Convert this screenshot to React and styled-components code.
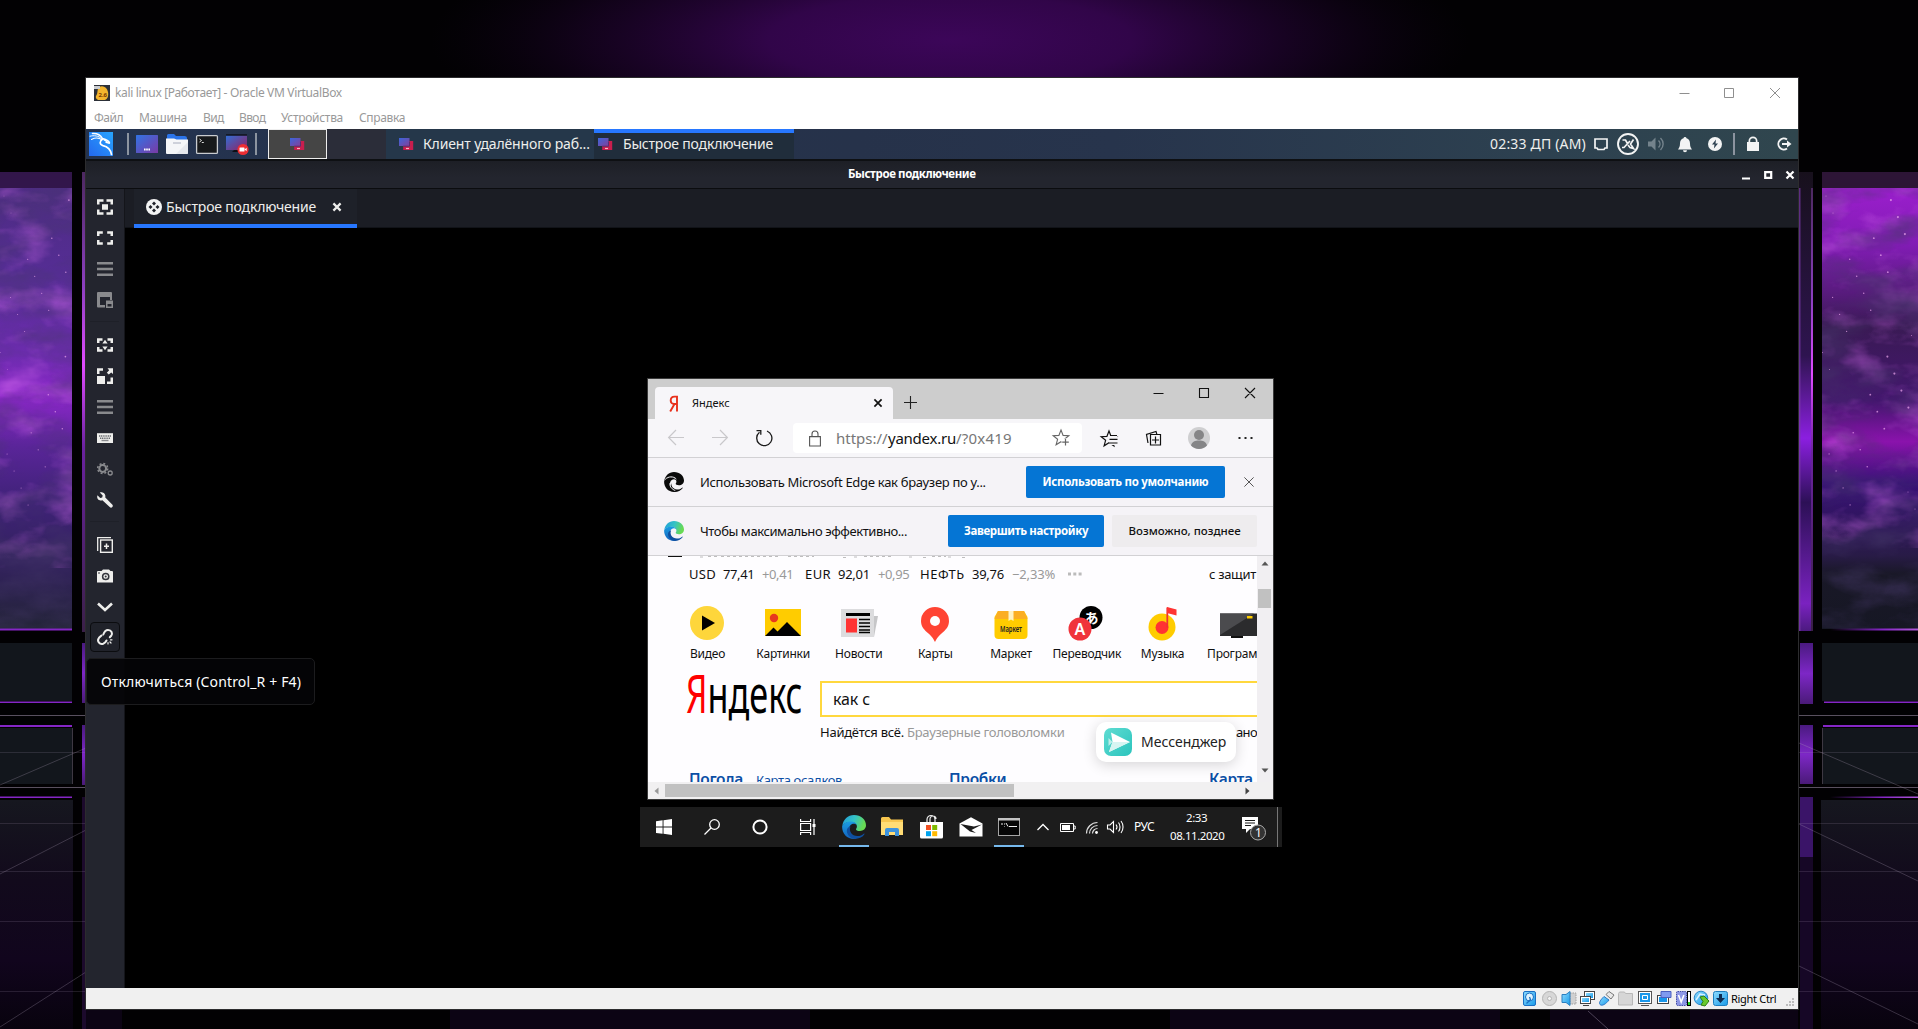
import React from "react";
import styled, { createGlobalStyle, css } from "styled-components";

const Global = createGlobalStyle`
  * { box-sizing: border-box; }
  html, body { margin: 0; padding: 0; background: #000; overflow: hidden; }
  body { font-family: "Noto Sans", "Open Sans", sans-serif; }
  svg { display: block; flex: none; }
`;

const Desktop = styled.main`
  position: relative;
  width: 1918px;
  height: 1029px;
  overflow: hidden;
  background: #020103;
`;

const Backdrop = styled.svg`
  position: absolute;
  inset: 0;
`;

const Txt = styled.span`
  display: block;
  flex: none;
  white-space: pre;
  width: ${(p) => (p.$w ? `${p.$w}px` : "auto")};
  margin-left: ${(p) => p.$ml || 0}px;
  padding-bottom: ${(p) => p.$up || 0}px;
  padding-top: ${(p) => p.$down || 0}px;
  font-size: ${(p) => p.$size || 12}px;
  font-weight: ${(p) => p.$weight || 400};
  letter-spacing: ${(p) => p.$ls || 0}px;
  line-height: ${(p) => p.$lh || 18}px;
  color: ${(p) => p.$color || "inherit"};
`;

const Icon = styled.svg`
  margin-left: ${(p) => p.$ml || 0}px;
  margin-top: ${(p) => p.$mt || 0}px;
  overflow: visible;
`;

/* ---------- VM window ---------- */

const VmWindow = styled.section`
  position: absolute;
  left: 86px;
  top: 78px;
  width: 1712px;
  height: 931px;
  display: flex;
  flex-direction: column;
  background: #fff;
  box-shadow: 0 0 0 1px #2c2c2e;
`;

const VmTitle = styled.header`
  display: flex;
  align-items: center;
  height: 29px;
  padding-left: 8px;
  color: #999;
`;

const VmMenu = styled.nav`
  display: flex;
  align-items: center;
  height: 22px;
  color: #999;
`;

const Spacer = styled.div`
  flex: 1;
`;

const Panel = styled.div`
  display: flex;
  align-items: center;
  height: 30px;
  background: linear-gradient(90deg, #24334f 0%, #26324a 45%, #27344c 60%, #2d4150 85%, #30464e 100%);
  color: #eeeeec;
  padding-left: 3px;
`;

const PanelRule = styled.i`
  width: 2px;
  height: 22px;
  background: #8c94a0;
  margin-left: ${(p) => p.$ml}px;
`;

const Workspace = styled.div`
  display: flex;
  align-items: center;
  justify-content: center;
  width: 59px;
  height: 30px;
  margin-left: ${(p) => p.$ml || 0}px;
  background: ${(p) => (p.$active ? "#454545" : "#2b2d39")};
  border: ${(p) => (p.$active ? "1px solid #eee" : "0")};
`;

const Task = styled.div`
  display: flex;
  align-items: center;
  height: 30px;
  width: ${(p) => p.$w}px;
  padding-left: ${(p) => p.$pl}px;
  background: ${(p) => (p.$active ? "#202d3b" : "#25374a")};
  border-top: ${(p) => (p.$active ? "4px solid #2777ff" : "0")};
  ${(p) =>
    p.$active &&
    css`
      padding-bottom: 4px;
    `}
`;

const ClientTitle = styled.div`
  display: flex;
  align-items: center;
  height: 30px;
  border-top: 2px solid #0e1013;
  border-bottom: 1px solid #0b0c0f;
  background: linear-gradient(#1d1f26, #23252e 60%);
  color: #fff;
`;

const ClientBody = styled.div`
  display: flex;
  flex: 1;
  min-height: 0;
  background: #23252e;
`;

const Tools = styled.aside`
  display: flex;
  flex-direction: column;
  align-items: center;
  width: 39px;
  padding: 2px 1px 0 0;
  border-right: 1px solid #14151a;
`;

const Tool = styled.div`
  display: flex;
  align-items: center;
  justify-content: center;
  width: 30px;
  height: 31px;
  flex: none;
  opacity: ${(p) => (p.$off ? 0.5 : 1)};
  color: #eeeeec;
  ${(p) =>
    p.$hover &&
    css`
      height: 30px;
      border: 1px solid #0b0c0f;
      border-radius: 4px;
      background: #20222a;
    `}
`;

const ToolRule = styled.i`
  width: 29px;
  height: 1px;
  margin: 6px 0 7px;
  flex: none;
  background: #1e2028;
`;

const Main = styled.div`
  display: flex;
  flex-direction: column;
  flex: 1;
`;

const TabBar = styled.div`
  display: flex;
  height: 39px;
  padding-left: 9px;
  background: #1b1d24;
  border-bottom: 1px solid #111318;
`;

const ClientTab = styled.div`
  display: flex;
  align-items: center;
  width: 223px;
  height: 39px;
  padding-left: 12px;
  background: #1e2129;
  border-bottom: 4px solid #2777ff;
  color: #eeeeec;
`;

const Stage = styled.div`
  position: relative;
  flex: 1;
  background: #000;
`;

const StatusBar = styled.footer`
  display: flex;
  align-items: center;
  justify-content: flex-end;
  height: 21px;
  background: #f0f0f0;
  color: #000;
`;

const Tooltip = styled.div`
  position: absolute;
  left: 86px;
  top: 658px;
  width: 229px;
  height: 47px;
  display: flex;
  align-items: center;
  padding-left: 14px;
  border: 1px solid #1c1c1e;
  border-radius: 5px;
  background: rgba(4, 4, 6, 0.93);
  color: #fff;
`;

/* ---------- Browser ---------- */

const Browser = styled.section`
  position: absolute;
  left: 523px;
  top: 151px;
  width: 625px;
  height: 420px;
  display: flex;
  flex-direction: column;
  background: #f6f4f8;
  box-shadow: 0 0 0 1px #3a3a3a;
  color: #111;
`;

const Strip = styled.div`
  display: flex;
  height: 40px;
  padding: 8px 0 0 7px;
  background: #cdcdcd;
`;

const PageTab = styled.div`
  display: flex;
  align-items: center;
  width: 238px;
  height: 32px;
  border-radius: 4px 4px 0 0;
  background: #f7f6f9;
`;

const StripIcons = styled.div`
  display: flex;
  align-items: flex-start;
  flex: 1;
`;

const Address = styled.div`
  display: flex;
  align-items: center;
  width: 289px;
  height: 30px;
  margin-left: 21px;
  border-radius: 4px;
  background: #fff;
`;

const Toolbar = styled.div`
  display: flex;
  align-items: center;
  height: 39px;
  border-bottom: 1px solid #d2d1d4;
  background: #f7f6f9;
`;

const InfoBar = styled.div`
  display: flex;
  align-items: center;
  height: 49px;
  padding-left: 16px;
  border-bottom: 1px solid #d2d1d4;
  background: #f5f3f7;
`;

const Button = styled.div`
  display: flex;
  align-items: center;
  justify-content: center;
  width: ${(p) => p.$w}px;
  height: 32px;
  margin-left: ${(p) => p.$ml}px;
  border-radius: 2px;
  background: ${(p) => (p.$plain ? "#eeecee" : "#0575d4")};
  color: ${(p) => (p.$plain ? "#111" : "#fff")};
`;

const View = styled.div`
  position: relative;
  display: flex;
  height: 226px;
`;

const Page = styled.div`
  width: 609px;
  height: 226px;
  overflow: hidden;
  background: #fefdff;
`;

const Row = styled.div`
  display: flex;
  align-items: ${(p) => p.$align || "center"};
  height: ${(p) => p.$h}px;
  padding-left: ${(p) => p.$pl || 0}px;
  margin-top: ${(p) => p.$mt || 0}px;
`;

const Service = styled.div`
  display: flex;
  flex: none;
  flex-direction: column;
  align-items: center;
  width: 75.8px;
`;

const SearchBox = styled.div`
  flex: none;
  display: flex;
  align-items: center;
  width: 520px;
  height: 36px;
  margin: 18px 0 0 18px;
  padding-left: 11px;
  border: 2px solid #ffd83d;
  background: #fff;
`;

const VScroll = styled.div`
  width: 16px;
  padding: 5px 1px 0 0;
  display: flex;
  flex-direction: column;
  align-items: center;
  background: #f1eff2;
`;

const HScroll = styled.div`
  display: flex;
  align-items: center;
  height: 17px;
  background: #f1f0f1;
`;

const Thumb = styled.i`
  width: ${(p) => p.$w}px;
  height: ${(p) => p.$h}px;
  margin: ${(p) => p.$m};
  background: #c1c1c1;
`;

const Messenger = styled.div`
  position: absolute;
  left: 448px;
  top: 166px;
  width: 140px;
  height: 40px;
  display: flex;
  align-items: center;
  padding-left: 8px;
  border-radius: 10px;
  background: #fff;
  box-shadow: 0 3px 14px rgba(0, 0, 0, 0.16);
  color: #222;
`;

const Taskbar = styled.div`
  position: absolute;
  left: 515px;
  top: 579px;
  width: 642px;
  height: 40px;
  display: flex;
  align-items: center;
  background: #1c1c1c;
  color: #fff;
`;

const TaskButton = styled.div`
  display: flex;
  align-items: center;
  justify-content: center;
  width: ${(p) => p.$w}px;
  height: 40px;
  margin-left: ${(p) => p.$ml || 0}px;
  border-top: 2px solid transparent;
  border-bottom: 2px solid ${(p) => (p.$open ? "#76b9ed" : "transparent")};
`;

const Clock = styled.div`
  display: flex;
  flex-direction: column;
  align-items: center;
  width: 56px;
  margin-left: 12px;
`;

/* ---------- drawings ---------- */

const Dragon = () => (
  <Icon width="24" height="24" viewBox="0 0 24 24">
    <defs>
      <linearGradient id="kd" x1="0" y1="1" x2="1" y2="0">
        <stop offset="0" stopColor="#2468ee" />
        <stop offset="1" stopColor="#27a5ff" />
      </linearGradient>
    </defs>
    <rect width="24" height="24" fill="url(#kd)" />
    <g fill="none" stroke="#fff" strokeLinecap="round">
      <path d="M1 4.2C5 3.2 9.500 3.600 12.500 6.600" strokeWidth="1" />
      <path d="M2.500 7.400C6 5.600 10 5.800 13 7.800" strokeWidth="1.100" />
      <path d="M3.500 1.500C8 1.200 11.500 3 13.500 6.500C17 7.500 20 8.400 20.500 11" strokeWidth="1.500" />
      <path d="M13.500 7C10.200 9.200 10.500 12.600 14 13.600C18.500 14.600 21.500 17 22.500 22.500" strokeWidth="1.700" />
      <path d="M15 7.600L20.500 11.500L17 10.500" strokeWidth="1.300" />
    </g>
  </Icon>
);

const Grad = ({ id, a = "#2f6fe8", b = "#8b2e8c" }) => (
  <linearGradient id={id} x1="0" y1="0" x2="1" y2="1">
    <stop offset="0" stopColor={a} />
    <stop offset="1" stopColor={b} />
  </linearGradient>
);

const ShowDesktop = () => (
  <Icon $ml={7} width="22" height="18" viewBox="0 0 22 18">
    <defs><Grad id="sd" a="#3174e6" b="#7a3aa5" /></defs>
    <rect width="22" height="18" rx=".5" fill="url(#sd)" />
    <path d="M8 14.500h6" stroke="#fff" strokeWidth="1.800" strokeDasharray="1.600 .6" />
  </Icon>
);

const Folder = () => (
  <Icon $ml={8} width="22" height="20" viewBox="0 0 22 20">
    <path d="M1 1.500Q1 0 2.500 0H8l2 2h8.500Q21 2 21 4v4H1z" fill="#2b74ea" />
    <path d="M0 4.500h8l2.500 1H22V19a1 1 0 0 1-1 1H1a1 1 0 0 1-1-1z" fill="#f5f6f8" />
    <path d="M22 8v11a1 1 0 0 1-1 1H10z" fill="#dfe2e8" opacity=".7" />
    <path d="M7 9h8" stroke="#b5bac6" strokeWidth="1.200" />
  </Icon>
);

const Terminal = () => (
  <Icon $ml={8} width="22" height="19" viewBox="0 0 22 19">
    <rect x=".6" y=".6" width="20.800" height="17.800" rx="1" fill="#17191b" stroke="#c9ccd0" strokeWidth="1.300" />
    <path d="M3.500 4l2 1.500-2 1.500M5.800 7.500h2" stroke="#ddd" fill="none" />
  </Icon>
);

const Recorder = () => (
  <Icon $ml={8} width="24" height="21" viewBox="0 0 24 21">
    <defs><Grad id="rc" a="#2f6fd8" b="#93205f" /></defs>
    <path d="M6 18l2-2h6v2z" fill="#0d0e14" />
    <rect x="0" y="1" width="21" height="15" fill="url(#rc)" />
    <path d="M0 1h21" stroke="#10131d" strokeWidth="1.500" />
    <circle cx="17" cy="15.500" r="5.600" fill="#ee2e33" />
    <rect x="13.500" y="13.500" width="5" height="4" rx=".6" fill="#fff" />
    <path d="M18.500 15.500l2.200-1.700v3.400z" fill="#fff" />
  </Icon>
);

const Remmina = ({ ml = 0 }) => (
  <Icon $ml={ml} width="15" height="12" viewBox="0 0 15 12">
    <defs><Grad id="rm" a="#3a66dc" b="#84409a" /></defs>
    <path d="M10 3h4.200v9H4.200V8H10z" fill="#c81e4e" />
    <rect x="0" y="0" width="10.500" height="8" fill="url(#rm)" />
    <path d="M4.200 8.200h6.300V3.500" fill="none" stroke="#5a2f72" strokeWidth="1" />
    <path d="M7 10.500h3" stroke="#f6b7c0" strokeWidth="1.200" />
  </Icon>
);

const tools = {
  fit: (
    <path d="M0 5.500V.3h6.500v2.500h-4v2.700zM9.500.3H16v5.200h-2.500V2.800h-4zM0 10.500v5.200h6.500v-2.500h-4v-2.700zM16 10.500v5.200H9.500v-2.500h4v-2.700zM5 5.200h6v5.600H5z" fill="currentColor" />
  ),
  full: (
    <path d="M0 6V1.200h5.800v2.500H2.500V6zM10.200 1.200H16V6h-2.500V3.700h-3.300zM0 10v4.800h5.800v-2.500H2.500V10zM16 10v4.800h-5.800v-2.500h3.300V10z" fill="currentColor" />
  ),
  menu: <path d="M0 2.200h16M0 8h16M0 13.800h16" stroke="currentColor" strokeWidth="2.400" />,
  multi: (
    <g>
      <path d="M1 0h13a1 1 0 0 1 1 1v7h-2V5H3v8h5v2.500H1a1 1 0 0 1-1-1V1a1 1 0 0 1 1-1z" fill="currentColor" />
      <path d="M9 8.500h7V16H9zM10.500 12v2.500h4V12z" fillRule="evenodd" fill="currentColor" />
    </g>
  ),
  dynamic: (
    <path d="M0 6V1.200h5.500v2.500H2.500V6zM10.500 1.200H16V6h-2.500V3.700h-3zM0 10v4.800h5.500v-2.500H2.500V10zM16 10v4.800h-5.500v-2.500h3V10zM8 2.800l2.600 3.700H5.400zM8 13.200L5.400 9.500h5.200z" fill="currentColor" />
  ),
  scale: (
    <path d="M0 6V.3h6v2.500H2.500V6zM16 9.500V16h-6v-2.500h3.500v-4zM0 8h8v8H0zM10.500.3H16V6l-1.800-1.600-2.400 2.200-2-1.900 2.400-2.400z" fill="currentColor" />
  ),
  keyboard: (
    <g>
      <rect x="0" y="3.200" width="16" height="9.800" fill="currentColor" />
      <path d="M2 6h12M3 8.300h10" stroke="#6b6d72" strokeWidth="1.600" strokeDasharray="1.200 .6" />
      <path d="M4.500 10.500h7" stroke="#8a8b8f" strokeWidth="1.400" />
    </g>
  ),
  gears: (
    <g fill="none" stroke="currentColor">
      <circle cx="5.700" cy="7.500" r="3.400" strokeWidth="2" />
      <circle cx="5.700" cy="7.500" r="5" strokeWidth="1.500" strokeDasharray="1.970 1.960" />
      <circle cx="13.200" cy="12" r="2" strokeWidth="1.300" />
    </g>
  ),
  wrench: (
    <path d="M2.800.6l2.900 2.900-.5 2-2 .5L.4 3.200C-.4 5.600.7 7.700 2.700 8.300c.9.300 1.900.2 2.700-.1l7.300 6.900c.8.7 1.900.7 2.600 0s.7-1.900-.1-2.600L8.300 5.400C8.900 3 7.500.9 5.500.5 4.600.2 3.600.2 2.800.6z" fill="currentColor" />
  ),
  duplicate: (
    <g fill="none" stroke="currentColor">
      <path d="M.7 14V.7H14" strokeWidth="1.300" />
      <rect x="3.600" y="3" width="11.700" height="12.300" strokeWidth="1.400" />
      <path d="M9.500 6.500v5.400M7 9.200h5" strokeWidth="1.500" />
    </g>
  ),
  camera: (
    <g>
      <path d="M0 4a1 1 0 0 1 1-1h3.500L6 1.500h6L13.500 3H15a1 1 0 0 1 1 1v10.500H0z" fill="currentColor" />
      <circle cx="8.700" cy="8.500" r="3.100" fill="none" stroke="#33353c" strokeWidth="1.500" />
      <circle cx="8.700" cy="8.500" r="1" fill="#33353c" />
      <path d="M2 4v2" stroke="#33353c" />
    </g>
  ),
  down: <path d="M1 4.500l7 6.500 7-6.500" fill="none" stroke="currentColor" strokeWidth="2.600" />,
  unlink: (
    <g fill="none" stroke="currentColor" strokeWidth="2" strokeLinecap="round">
      <path d="M6.300 5.500C7 3.500 8.500 1 11 1c3.500 0 5 3.500 3.200 5.800L12.800 8.300" />
      <path d="M4.500 6.500L2 8.800c-2.500 3 .5 7 4.200 5.900 1.500-.5 2.500-1.500 3.300-3.200" />
      <path d="M11 13.500v1.500M13 13l1 1M13.500 10.800h1.500" strokeWidth="1.200" />
    </g>
  ),
};

const SideIcon = ({ k }) => (
  <Icon width="16" height="16" viewBox="0 0 16 16">{tools[k]}</Icon>
);

const Cross = ({ s = 10, w = 1, c = "currentColor", ml = 0, mt = 0 }) => (
  <Icon $ml={ml} $mt={mt} width={s} height={s} viewBox={`0 0 ${s} ${s}`}>
    <path d={`M.4.4L${s - 0.4} ${s - 0.4}M${s - 0.4}.4L.4 ${s - 0.4}`} stroke={c} strokeWidth={w} />
  </Icon>
);

const EdgeLogo = ({ s, id }) => (
  <Icon width={s} height={s} viewBox="0 0 24 24">
    <defs>
      <linearGradient id={`${id}a`} x1="0" y1="0" x2="1" y2=".3">
        <stop offset="0" stopColor="#1f9bdc" />
        <stop offset=".55" stopColor="#35c3c4" />
        <stop offset="1" stopColor="#68da53" />
      </linearGradient>
      <linearGradient id={`${id}b`} x1="0" y1="0" x2="0" y2="1">
        <stop offset="0" stopColor="#1b9de2" />
        <stop offset="1" stopColor="#1362bd" />
      </linearGradient>
    </defs>
    <path d="M.3 11C1 4.500 6 0 12 0c7 0 12 4.800 12 10.300 0 3.500-2.700 5.700-6 5.700-2.600 0-4-.9-4-1.800 0-.7.9-1 .9-2.800C14.900 8.800 12.300 7 9.300 7 4.800 7 1.500 8.500.3 11z" fill={`url(#${id}a)`} />
    <path d="M.1 11.500C1.300 8.200 4.800 6.500 8.800 6.500c3.400 0 5.500 1.700 6 3.600-1-1-2-1.400-3-1.400-3 0-4.800 2.600-4.600 5.700.3 4 3.500 7.500 8.300 7.500-.6.500-1.300 2.100-3.500 2.100C5 24 0 18.500.1 11.500z" fill={`url(#${id}b)`} />
    <path d="M8.500 11.500c-2 4.500 1.300 9.600 7 9.600 2.600 0 4.700-.9 6.200-2.300.6-.5 1 .1.600.8C20.300 22.500 16.500 24 13 24c-5.500-.6-9-5.500-8-9.500.4-1.500 1.600-2.600 3.500-3z" fill="#0f4f9f" />
  </Icon>
);

const EdgeMono = () => (
  <Icon width="20" height="20" viewBox="0 0 24 24">
    <path d="M.3 11C1 4.500 6 0 12 0c7 0 12 4.800 12 10.300 0 3.500-2.700 5.700-6 5.700-2.600 0-4-.9-4-1.800 0-.7.9-1 .9-2.800C14.900 8.800 12.300 7 9.300 7 4.800 7 1.500 8.500.3 11z" fill="#0a0a0a" />
    <path d="M.1 11.500C1.300 8.200 4.800 6.500 8.800 6.500c3.400 0 5.500 1.700 6 3.600-1-1-2-1.400-3-1.400-3 0-4.800 2.600-4.600 5.700.3 4 3.500 7.500 8.300 7.500-.6.500-1.300 2.100-3.500 2.100C5 24 0 18.500.1 11.500z" fill="#0a0a0a" />
    <path d="M9.500 11.500c-2 4.500.8 9.100 6 9.600 2.600 0 4.700-.9 6.200-2.300.6-.5 1 .1.600.8C20.300 22.500 16.500 24 13 24c-3-1-5-3-5.500-6z" fill="#0a0a0a" />
    <path d="M1.500 8.800C5 5 11.500 4.800 14.800 8.500M7 13.500c-.3 4.500 3 7.500 6.500 8.700" fill="none" stroke="#f5f3f7" strokeWidth="1.200" />
  </Icon>
);

const star = "M9 1l2.100 5.400 5.700.3-4.400 3.600 1.500 5.500L9 12.700l-4.900 3.100 1.500-5.500L1.200 6.700l5.700-.3z";

const services = [
  ["Видео", 35,
    <g key="v"><circle cx="20" cy="20" r="17" fill="#fed63b" /><path d="M15 12.500v15L28 20z" fill="#000" /></g>],
  ["Картинки", 54,
    <g key="k"><path d="M2 6h36v27H2z" fill="#fc0" /><circle cx="11" cy="15" r="4.200" fill="#e8391d" /><path d="M2 33l8.500-8.500 4 4L24 19l14 14z" fill="#000" /></g>],
  ["Новости", 48,
    <g key="n"><path d="M32 13h7l-4 21h-5z" fill="#c6c6c8" /><path d="M2 6h33v28H2z" fill="#dcdcde" /><path d="M7 10h24v3H7z" fill="#000" /><path d="M7 15.500h11v14H7z" fill="#f33" /><path d="M20 16.500h11M20 20h11M20 23.500h11M20 27h11M20 29.500h11" stroke="#000" strokeWidth="1.500" /></g>],
  ["Карты", 34,
    <g key="m"><path d="M20 4a14 14 0 0 1 14 14c0 6-3.500 9-7.500 12.500C22.500 34 21.500 36 20 39c-1.500-3-2.500-5-6.500-8.500C9.500 27 6 24 6 18A14 14 0 0 1 20 4z" fill="#ff4433" /><circle cx="20" cy="18" r="5" fill="#fff" /></g>],
  ["Маркет", 41,
    <g key="r"><path d="M7 8h26l3.500 6v18a4 4 0 0 1-4 4h-25a4 4 0 0 1-4-4V14z" fill="#fc0" /><path d="M7 8h26l3.500 8h-33z" fill="#fbae23" /><path d="M17.500 8h5v10l-2.500-1.500-2.500 1.500z" fill="#fff3c4" /><text x="9" y="28.500" textLength="22" lengthAdjust="spacingAndGlyphs" fontSize="9" fontWeight="600" fill="#222">Маркет</text></g>],
  ["Переводчик", 68,
    <g key="p"><circle cx="25" cy="14.500" r="11.500" fill="#000" /><text x="18.500" y="20" fontFamily="Noto Sans CJK JP, sans-serif" fontWeight="700" fontSize="14" fill="#fff">あ</text><circle cx="14" cy="26" r="11.500" fill="#f0343c" /><text x="8.500" y="31.500" fontSize="16" fontWeight="600" fill="#fff">A</text></g>],
  ["Музыка", 43,
    <g key="u"><circle cx="20" cy="24" r="13.500" fill="#fc0" /><circle cx="20" cy="24.500" r="6.500" fill="#f33" /><path d="M25.300 4.500v20" stroke="#e33" strokeWidth="1.800" /><path d="M25 4l9.500 2.500v6L25 10z" fill="#f33" /></g>],
  ["Програм", 62,
    <g key="t"><path d="M2 10.500h40V33H2z" fill="#2b2b2d" /><path d="M2 10.500h34L2 32z" fill="#4b4b4e" /><path d="M29 13h5.500v2.500H29z" fill="#fc0" /><path d="M13 34h12" stroke="#111" strokeWidth="2" /></g>],
];

const rates = [
  ["USD", 27, 41, "#111", 0.3], ["77,41", 31, 7, "#111", -0.4], ["+0,41", 31, 8, "#999", -0.4],
  ["EUR", 26, 12, "#111", 0.4], ["92,01", 32, 7, "#111", -0.25], ["+0,95", 31, 8, "#999", -0.4],
  ["НЕФТЬ", 45, 11, "#111", 0.5], ["39,76", 32, 7, "#111", -0.25], ["−2,33%", 43, 8, "#999", -0.15],
];

const StatusIcons = () => (
  <Icon width="206" height="17" viewBox="1523 0 206 17">
    <defs>
      <linearGradient id="sb" x1="0" y1="0" x2="1" y2="1">
        <stop offset="0" stopColor="#8fdcff" />
        <stop offset="1" stopColor="#189ae8" />
      </linearGradient>
    </defs>
    <rect x="1524.500" y="1.500" width="12" height="14" rx="1.500" fill="url(#sb)" stroke="#1a6fc4" />
    <circle cx="1530.500" cy="7" r="4" fill="#dff4ff" stroke="#1a6fc4" />
    <path d="M1530.500 7l1 2.500-4 4" fill="none" stroke="#1a6fc4" strokeWidth="1.300" />
    <circle cx="1550.500" cy="8.500" r="7" fill="#d7d7d7" stroke="#b5b5b5" />
    <circle cx="1550.500" cy="8.500" r="2" fill="#f4f4f4" stroke="#b5b5b5" />
    <path d="M1571 3h6v11h-6z" fill="#d0d0d0" stroke="#a0a0a0" strokeDasharray="1.500 1" />
    <path d="M1563 4.500h4l4-3v14l-4-3h-4z" fill="url(#sb)" stroke="#2b7fc0" />
    <rect x="1585.500" y="1.500" width="10" height="8" fill="#fff" stroke="#444" />
    <path d="M1587 3h7v5h-7z" fill="url(#sb)" />
    <rect x="1581.500" y="6.500" width="10" height="7" fill="#fff" stroke="#444" />
    <path d="M1583 8h7v4h-7z" fill="url(#sb)" />
    <path d="M1584 15.500h6" stroke="#444" />
    <path d="M1601 14.500c-1.500-2 1-5 4-8l5 3.500c-3 4-7 6.500-9 4.500z" fill="url(#sb)" stroke="#2a78c8" />
    <path d="M1607 4.500l3-3 5 3.500-3 4z" fill="#e8e8e8" stroke="#777" />
    <path d="M1619.500 3.500l1-1.500h5l1 1.500h7v11.500h-14z" fill="#d6d6d6" stroke="#b8b8b8" />
    <rect x="1639.500" y="1.500" width="13" height="12" fill="#fff" stroke="#555" />
    <path d="M1641 3h10v9h-10z" fill="#1a97ea" />
    <path d="M1643.500 5.500h5v4h-5z" fill="none" stroke="#fff" />
    <path d="M1642 15.500h8" stroke="#555" />
    <rect x="1658.500" y="5.500" width="11" height="8" fill="#fff" stroke="#444" />
    <path d="M1660 7h8v5h-8z" fill="#1a97ea" />
    <path d="M1662 1.500h10v6h-10z" fill="#7f9af0" stroke="#4a5fc0" />
    <rect x="1677.500" y="1.500" width="10" height="14" rx="1" fill="#8d97e6" stroke="#404ba8" strokeDasharray="1.500 .8" />
    <path d="M1679.500 5l2.700 7 2.700-7" fill="none" stroke="#fff" strokeWidth="1.600" />
    <rect x="1688.500" y="1.500" width="3" height="14" fill="#fff" stroke="#000" />
    <path d="M1689 12h2v3h-2z" fill="#23d523" />
    <circle cx="1702" cy="8" r="6.800" fill="url(#sb)" stroke="#2a86c8" />
    <path d="M1697 10l4-6 5 1" fill="none" stroke="#d9f2ff" strokeWidth="1.500" />
    <path d="M1701 7l4-1 5 5-4 5-4-1 2-3.500z" fill="#67c92c" stroke="#2e7d12" />
    <rect x="1714.500" y="1.500" width="14" height="14" rx="2" fill="url(#sb)" stroke="#1c7ec0" />
    <path d="M1720 4h3v4h3l-4.500 5-4.500-5h3z" fill="#0d2c52" />
  </Icon>
);

const stars = Array.from({ length: 34 }, (_, i) => [
  (i * 37.7 + 11) % 96,
  190 + ((i * 97.3 + 23) % 330),
  0.5 + ((i * 7) % 5) * 0.14,
]);

const Wallpaper = () => (
  <Backdrop width="1918" height="1029" viewBox="0 0 1918 1029">
    <defs>
      <radialGradient id="glow" cx=".5" cy=".5" r=".5">
        <stop offset="0" stopColor="#3c0659" />
        <stop offset=".35" stopColor="#310549" />
        <stop offset=".7" stopColor="#170322" stopOpacity=".8" />
        <stop offset="1" stopColor="#0c0212" stopOpacity="0" />
      </radialGradient>
      <linearGradient id="lp" x1="0" y1="0" x2="0" y2="1">
        <stop offset="0" stopColor="#4c2c80" />
        <stop offset=".22" stopColor="#552d94" />
        <stop offset=".4" stopColor="#6c2cae" />
        <stop offset=".49" stopColor="#8b27c9" />
        <stop offset=".6" stopColor="#5a2599" />
        <stop offset=".72" stopColor="#3f2278" />
        <stop offset=".88" stopColor="#302258" />
        <stop offset="1" stopColor="#232437" />
      </linearGradient>
      <linearGradient id="rp" x1="0" y1="0" x2="0" y2="1">
        <stop offset="0" stopColor="#a31fd4" />
        <stop offset=".16" stopColor="#811cb4" />
        <stop offset=".34" stopColor="#3a1a55" />
        <stop offset=".5" stopColor="#43166e" />
        <stop offset=".59" stopColor="#8a13ac" />
        <stop offset=".68" stopColor="#381078" />
        <stop offset=".84" stopColor="#281b46" />
        <stop offset=".88" stopColor="#191827" />
        <stop offset="1" stopColor="#161724" />
      </linearGradient>
      <linearGradient id="low" x1="0" y1="0" x2="0" y2="1">
        <stop offset="0" stopColor="#16171f" />
        <stop offset=".35" stopColor="#120a1c" />
        <stop offset=".7" stopColor="#11051d" />
        <stop offset="1" stopColor="#08030e" />
      </linearGradient>
      <linearGradient id="bar" x1="0" y1="0" x2="0" y2="1">
        <stop offset="0" stopColor="#17101c" />
        <stop offset=".4" stopColor="#2e1450" />
        <stop offset=".58" stopColor="#8b1fe0" />
        <stop offset=".72" stopColor="#2c1056" />
        <stop offset=".94" stopColor="#7a22c0" />
        <stop offset="1" stopColor="#4c1a80" />
      </linearGradient>
      <linearGradient id="neon" x1="0" y1="0" x2="0" y2="1">
        <stop offset="0" stopColor="#4c2860" />
        <stop offset=".25" stopColor="#8c3fc0" />
        <stop offset=".42" stopColor="#e04bff" />
        <stop offset=".6" stopColor="#6a22a0" />
        <stop offset="1" stopColor="#3a2048" />
      </linearGradient>
      <linearGradient id="cell" x1="0" y1="0" x2="0" y2="1">
        <stop offset="0" stopColor="#4a1a80" />
        <stop offset=".5" stopColor="#7d27c6" />
        <stop offset="1" stopColor="#4a1a78" />
      </linearGradient>
      <linearGradient id="fadeR" x1="0" y1="0" x2="1" y2="0">
        <stop offset="0" stopColor="#8526c6" stopOpacity="0" />
        <stop offset=".6" stopColor="#8526c6" />
        <stop offset="1" stopColor="#b05ad8" />
      </linearGradient>
      <filter id="neb" x="0" y="0" width="1" height="1">
        <feTurbulence type="fractalNoise" baseFrequency=".014 .03" numOctaves="5" seed="8" />
        <feColorMatrix values="0 0 0 0 .06  0 0 0 0 .04  0 0 0 0 .14  2 0 0 0 -.8" />
      </filter>
      <filter id="neb2" x="0" y="0" width="1" height="1">
        <feTurbulence type="fractalNoise" baseFrequency=".02 .035" numOctaves="4" seed="21" />
        <feColorMatrix values="0 0 0 0 .72  0 0 0 0 .16  0 0 0 0 .9  0 2.4 0 0 -1.150" />
      </filter>
    </defs>
    <rect width="1918" height="1029" fill="#020103" />
    <ellipse cx="950" cy="40" rx="520" ry="130" fill="url(#glow)" />

    <rect x="0" y="172" width="72" height="457" fill="url(#lp)" />
    <rect x="1822" y="172" width="96" height="457" fill="url(#rp)" />
    <rect x="0" y="188" width="72" height="380" filter="url(#neb2)" opacity=".45" />
    <rect x="0" y="188" width="72" height="440" filter="url(#neb)" opacity=".6" />
    <rect x="1822" y="188" width="96" height="360" filter="url(#neb2)" opacity=".45" />
    <rect x="1822" y="188" width="96" height="440" filter="url(#neb)" opacity=".65" />
    <rect x="0" y="172" width="72" height="16" fill="#2a0f38" opacity=".75" />
    <rect x="1822" y="172" width="96" height="16" fill="#1c1420" opacity=".88" />
    {stars.map(([x, y, r], i) => (
      <g key={i} fill="#f0a8f0" opacity=".7">
        <circle cx={1822 + x} cy={y} r={r} />
        {x < 70 && <circle cx={x} cy={y} r={r * 0.8} />}
      </g>
    ))}
    <g fill="#12161c">
      <path d="M0 643h72v58H0zM1822 643h96v58h-96z" />
      <path d="M0 728h72v56H0zM1823 728h95v56h-95z" />
    </g>
    <path d="M0 800h73v229H0z" fill="url(#low)" />
    <path d="M1821 800h97v229h-97z" fill="url(#low)" />
    <g fill="#8526c6">
      <path d="M0 628.500h72v2H0zM0 701.500h72v1.500H0zM0 725h72v2H0zM0 796.500h72v1.500H0z" />
      <path d="M1824 701.500h94v1.500h-94zM1823 725h95v2h-95z" />
    </g>
    <path d="M1830 628.500h88v2h-88zM1830 796.500h88v1.500h-88z" fill="url(#fadeR)" />
    <rect x="82" y="172" width="4" height="460" fill="url(#neon)" />
    <path d="M82 643h4v60h-4z" fill="url(#cell)" />
    <path d="M82 725h4v60h-4z" fill="url(#cell)" />
    <path d="M82 797h4v232h-4z" fill="#1c0a2c" />
    <rect x="1799" y="172" width="14" height="459" fill="url(#bar)" />
    <rect x="1799" y="188" width="1.500" height="443" fill="#7a3aa8" opacity=".7" />
    <rect x="1811" y="188" width="2" height="443" fill="url(#neon)" />
    <path d="M1800 643h13v61h-13z" fill="url(#cell)" />
    <path d="M1800 725h13v59h-13z" fill="url(#cell)" />
    <path d="M1800 797h13v60h-13z" fill="#3a1468" />
    <path d="M1800 857h13v172h-13z" fill="#160726" />
    <path d="M86 1010h36v19H86zM450 1010h360v19H450zM1170 1010h330v19h-330zM1550 1010h120v19h-120zM1690 1010h108v19h-108z" fill="#0c0414" />
    <g stroke="#b0a0bc" fill="none">
      <path d="M0 715.500h86M1799 715.500h119M0 787.500h86M1799 787.500h119" opacity=".5" />
      <path d="M0 752.500h86M1799 752.500h119M0 823.500h86M1799 823.500h119M0 871.500h86M1799 871.500h119M0 921.500h86M1799 921.500h119M0 991.500h86M1799 991.500h119" opacity=".17" />
      <path d="M0 785L86 748M0 874L86 830M0 1027L86 972M1799 743L1918 794M1799 824L1918 881M1799 966L1918 1024" opacity=".28" />
      <path d="M72.500 728v56M1822.500 728v56" opacity=".35" />
      <path d="M1588 1011l20 18" opacity=".4" />
    </g>
  </Backdrop>
);

export default function App() {
  return (
    <Desktop>
      <Global />
      <Wallpaper />
      <VmWindow>
        <VmTitle>
          <Icon width="16" height="16" viewBox="0 0 16 16">
            <rect width="16" height="16" fill="#2c3038" />
            <path d="M5 2c4-2 8 0 9 5 .8 4-.5 7-3 8H4c-2-1-3-3-1.500-5C4 8 3 4 5 2z" fill="#f3b52e" />
            <path d="M0 1h6v3H0z" fill="#c9ccd0" />
            <text x="4.500" y="12" fontSize="6" fontWeight="700" fill="#7c3a00">2.6</text>
          </Icon>
          <Txt $w={227} $ml={5} $ls={-0.34}>kali linux [Работает] - Oracle VM VirtualBox</Txt>
          <Spacer />
          <Icon width="104" height="12" viewBox="0 0 104 12">
            <path d="M.5 6.500h10M45.500 1.500h9v9h-9zM91 1l10 10M101 1L91 11" fill="none" stroke="#8f8f8f" />
          </Icon>
          <Txt $w={15} />
        </VmTitle>
        <VmMenu>
          <Txt $w={29} $ml={8} $ls={-0.5}>Файл</Txt>
          <Txt $w={48} $ml={16} $ls={-0.3}>Машина</Txt>
          <Txt $w={20} $ml={16} $ls={-0.6}>Вид</Txt>
          <Txt $w={26} $ml={16} $ls={-0.6}>Ввод</Txt>
          <Txt $w={62} $ml={16} $ls={-0.3}>Устройства</Txt>
          <Txt $w={46} $ml={16} $ls={-0.36}>Справка</Txt>
        </VmMenu>
        <Panel>
          <Dragon />
          <PanelRule $ml={14} />
          <ShowDesktop />
          <Folder />
          <Terminal />
          <Recorder />
          <PanelRule $ml={5} />
          <Workspace $active $ml={11}><Remmina /></Workspace>
          <Workspace />
          <Task $w={208} $pl={13}>
            <Remmina />
            <Txt $w={167} $ml={9} $size={14} $ls={-0.14} $up={1}>Клиент удалённого раб...</Txt>
          </Task>
          <Task $w={200} $pl={4} $active>
            <Remmina />
            <Txt $w={150} $ml={10} $size={14} $ls={-0.19}>Быстрое подключение</Txt>
          </Task>
          <Spacer />
          <Txt $w={96} $size={14} $ls={0.18} $up={1}>02:33 ДП (AM)</Txt>
          <Icon $ml={8} width="204" height="24" viewBox="1594 0 204 24">
            <g fill="none" stroke="#f3f4f4">
              <path d="M1595 7h12v9h-2l-1 1.500h-6l-1-1.500h-2z" strokeWidth="1.700" />
              <circle cx="1628" cy="12" r="10" strokeWidth="1.900" />
              <path d="M1622.500 8h3l2 3.500M1622 15.500h2l6-6.500M1633.500 7.500l-3 4.500 3 4.500-3.500-1-2-2.500" strokeWidth="1.700" />
              <path d="M1658.500 8.500c2 2 2 5 0 7M1660.500 6c3.500 3.500 3.500 8.500 0 12" stroke="#74838c" strokeWidth="1.400" />
            </g>
            <path d="M1648 9.500h3.500l4-4v13l-4-4h-3.500z" fill="#74838c" />
            <path d="M1685 5a1.500 1.500 0 0 1 1.500 1.200c2.500.8 3.500 2.800 3.500 5.300 0 3 .8 4.500 2 6h-14c1.200-1.500 2-3 2-6 0-2.500 1-4.500 3.500-5.300A1.500 1.500 0 0 1 1685 5zM1683 18.300h4a2 2 0 0 1-4 0z" fill="#f3f4f4" />
            <circle cx="1715" cy="12" r="7" fill="#f3f4f4" />
            <path d="M1716 7.500l-4 5h2.500l-.6 4 4.100-5h-2.500z" fill="#2d4150" />
            <path d="M1733 1h2v22h-2z" fill="#8c94a0" />
            <path d="M1747 10.500h1.500V9.500a4.500 4.500 0 0 1 9 0v1h1.500v9h-12zM1750.200 10.500h5.600v-1a2.800 2.800 0 0 0-5.600 0z" fill="#f3f4f4" fillRule="evenodd" transform="translate(0 -.5)" />
            <path d="M1787 7.500a5.500 5.500 0 1 0 0 9" fill="none" stroke="#f3f4f4" strokeWidth="1.900" />
            <path d="M1782 12h6" stroke="#f3f4f4" strokeWidth="2" />
            <path d="M1787 8.500l4.500 3.500-4.500 3.500z" fill="#f3f4f4" />
          </Icon>
        </Panel>
        <ClientTitle>
          <Txt $w={128} $ml={762} $weight={700} $size={11.5} $ls={-0.4} $up={2}>Быстрое подключение</Txt>
          <Spacer />
          <Icon width="58" height="12" viewBox="0 0 58 12">
            <path d="M2 9.500h8M25.200 3.200h6v5.600h-6z" fill="none" stroke="#fff" strokeWidth="2.200" />
            <path d="M46.500 2.500l7 7M53.500 2.500l-7 7" stroke="#fff" strokeWidth="2.200" />
          </Icon>
        </ClientTitle>
        <ClientBody>
          <Tools>
            <Tool><SideIcon k="fit" /></Tool>
            <Tool><SideIcon k="full" /></Tool>
            <Tool $off><SideIcon k="menu" /></Tool>
            <Tool $off><SideIcon k="multi" /></Tool>
            <ToolRule />
            <Tool><SideIcon k="dynamic" /></Tool>
            <Tool><SideIcon k="scale" /></Tool>
            <Tool $off><SideIcon k="menu" /></Tool>
            <Tool><SideIcon k="keyboard" /></Tool>
            <Tool $off><SideIcon k="gears" /></Tool>
            <Tool><SideIcon k="wrench" /></Tool>
            <ToolRule />
            <Tool><SideIcon k="duplicate" /></Tool>
            <Tool><SideIcon k="camera" /></Tool>
            <Tool><SideIcon k="down" /></Tool>
            <Tool $hover><SideIcon k="unlink" /></Tool>
          </Tools>
          <Main>
            <TabBar>
              <ClientTab>
                <Icon width="16" height="16" viewBox="0 0 16 16">
                  <circle cx="8" cy="8" r="8" fill="#f3f4f4" />
                  <path d="M8 2.500L10 4.500 8 6.500 6 4.500zM8 9.500l2 2-2 2-2-2zM4.500 6l2 2-2 2-2-2zM11.500 6l2 2-2 2-2-2z" fill="#1e2129" />
                </Icon>
                <Txt $w={150} $ml={4} $size={14} $ls={-0.19} $down={1}>Быстрое подключение</Txt>
                <Cross s={8} w={2.2} ml={17} />
              </ClientTab>
            </TabBar>
            <Stage>
              <Browser>
                <Strip>
                  <PageTab>
                    <Icon $ml={14} width="10" height="17" viewBox="0 0 10 17">
                      <path d="M8 .8v15.700M8 1.600H5.500C2.500 1.600 1.700 3.600 1.700 5.500c0 2.400 1.600 3.500 3.300 3.500h3M5.500 9L1.200 16.500" fill="none" stroke="#e8311c" strokeWidth="1.900" />
                    </Icon>
                    <Txt $w={38} $ml={13} $size={11}>Яндекс</Txt>
                    <Cross s={8} w={1.7} ml={144} />
                  </PageTab>
                  <StripIcons>
                    <Icon $ml={11} $mt={9} width="13" height="13" viewBox="0 0 13 13">
                      <path d="M6.500 0v13M0 6.500h13" stroke="#222" strokeWidth="1.100" />
                    </Icon>
                    <Icon $ml={236} width="104" height="12" viewBox="0 0 104 12">
                      <path d="M.5 6.500h10M46.500 1.500h9v9h-9zM92 1l10 10M102 1L92 11" fill="none" stroke="#111" strokeWidth="1.100" />
                    </Icon>
                  </StripIcons>
                </Strip>
                <Toolbar>
                  <Icon $ml={20} width="104" height="20" viewBox="0 0 104 20">
                    <path d="M16 9.500H.8M8 2L.6 9.500 8 17M44 9.500h15.200M52 2l7.400 7.500L52 17" fill="none" stroke="#c9c8cb" strokeWidth="1.200" />
                    <path d="M99 3a7.600 7.600 0 1 1-7.500 1.200M88.500 2.600h4.300v4.200" fill="none" stroke="#1a1a1a" strokeWidth="1.300" />
                  </Icon>
                  <Address>
                    <Icon $ml={16} width="12" height="17" viewBox="0 0 12 17">
                      <path d="M.6 6.600h10.800v9.400H.6zM3 6.500V4a3 3 0 0 1 6 0v2.500" fill="none" stroke="#555" strokeWidth="1.100" />
                    </Icon>
                    <Txt $w={52} $ml={15} $size={15} $lh={22}>
                      <Txt as="span" $size={15} $lh={22} $color="#777">https://</Txt>
                    </Txt>
                    <Txt $w={68} $size={15} $lh={22} $ls={-0.24} $color="#111">yandex.ru</Txt>
                    <Txt $w={56} $size={15} $lh={22} $ls={0.2} $color="#777">/?0x419</Txt>
                    <Icon $ml={40} width="18" height="18" viewBox="0 0 18 18">
                      <path d={star} fill="none" stroke="#666" strokeWidth="1.100" />
                      <path d="M9.500 9.500h8v8h-8z" fill="#fff" />
                      <path d="M13.500 10v6.500M10.200 13.200h6.600" stroke="#666" strokeWidth="1.200" />
                    </Icon>
                  </Address>
                  <Icon $ml={18} width="160" height="24" viewBox="1100 0 160 24">
                    <g transform="translate(1100 4)">
                      <path d={star} fill="none" stroke="#111" strokeWidth="1.200" />
                      <path d="M9.500 5h8v10h-8z" fill="#f7f6f9" />
                      <path d="M10 5.500h7M9.500 9.300h8M9.500 13h8" stroke="#111" strokeWidth="1.200" />
                    </g>
                    <path d="M1148 17l-1.500-8.500 9.500-3 .8 2.500M1150.500 8.500h10v10.500h-10zM1155.500 10.500v7M1152 14h7" fill="none" stroke="#111" strokeWidth="1.200" />
                    <circle cx="1199" cy="12" r="11" fill="#cfcfd1" />
                    <circle cx="1199" cy="9" r="5" fill="#858587" />
                    <path d="M1191 19.500c1-4 4-5 8-5s7 1 8 5a11 11 0 0 1-16 0z" fill="#858587" />
                    <path d="M1238.500 12h14" stroke="#222" strokeWidth="2" strokeDasharray="2 4" />
                  </Icon>
                </Toolbar>
                <InfoBar>
                  <EdgeMono />
                  <Txt $w={286} $ml={16} $size={13} $ls={-0.31}>Использовать Microsoft Edge как браузер по у...</Txt>
                  <Button $w={199} $ml={40}><Txt $w={166} $size={11.5} $ls={-0.3} $weight={700}>Использовать по умолчанию</Txt></Button>
                  <Cross ml={19} c="#555" />
                </InfoBar>
                <InfoBar>
                  <EdgeLogo s={20} id="e1" />
                  <Txt $w={207} $ml={16} $size={13} $ls={-0.42}>Чтобы максимально эффективно...</Txt>
                  <Button $w={156} $ml={41}><Txt $w={124} $size={11.5} $ls={-0.36} $weight={700}>Завершить настройку</Txt></Button>
                  <Button $w={145} $ml={8} $plain><Txt $w={112} $size={11.5} $weight={500}>Возможно, позднее</Txt></Button>
                </InfoBar>
                <View>
                  <Page>
                    <Icon width="609" height="3" viewBox="0 0 609 3">
                      <path d="M20 0h14v1H20z" fill="#111" />
                      <path d="M52 1h3M60 .5h9M73 .5h60M140 .5h26M195 1.500h3M206 1h3M216 .5h30M261 1h6M275 1.500h3M284 .5h14M300 1h5M314 1.500h3" stroke="#777" opacity=".6" strokeWidth=".8" strokeDasharray="3 3" />
                    </Icon>
                    <Row $h={30}>
                      {rates.map(([t, w, ml, c, ls], i) => (
                        <Txt key={i} $w={w} $ml={ml} $size={13} $color={c} $ls={ls}>{t}</Txt>
                      ))}
                      <Icon $ml={13} width="14" height="4" viewBox="0 0 14 4">
                        <path d="M0 2h14" stroke="#bbb" strokeWidth="3" strokeDasharray="3 2.300" />
                      </Icon>
                      <Txt $w={47} $ml={127} $size={13} $ls={-0.31}>с защит</Txt>
                    </Row>
                    <Row $h={74} $pl={21.6} $align="flex-start">
                      {services.map(([t, w, g]) => (
                        <Service key={t}>
                          <Icon $mt={14} width="40" height="40" viewBox="0 0 40 40">{g}</Icon>
                          <Txt $w={w} $lh={21} $size={12} $ls={-0.22}>{t}</Txt>
                        </Service>
                      ))}
                    </Row>
                    <Row $h={56} $pl={38} $align="flex-start">
                      <Icon width="116" height="60" viewBox="686 663 116 60">
                        <text x="686" y="713" fontSize="53" fill="#f00" textLength="21.500" lengthAdjust="spacingAndGlyphs">Я</text>
                        <text x="707.500" y="713" fontSize="53" fill="#000" textLength="95" lengthAdjust="spacingAndGlyphs">ндекс</text>
                      </Icon>
                      <SearchBox><Txt $w={37} $size={16} $lh={22} $ls={-0.13} $up={1}>как с</Txt></SearchBox>
                    </Row>
                    <Row $h={26}>
                      <Txt $w={84} $ml={172} $size={13} $ls={-0.25}>Найдётся всё.</Txt>
                      <Txt $w={158} $ml={3} $size={13} $ls={-0.27} $color="#999">Браузерные головоломки</Txt>
                      <Txt $w={21} $ml={171} $size={13} $ls={-0.65}>ано</Txt>
                    </Row>
                    <Row $h={25} $mt={21}>
                      <Txt $w={54} $ml={41} $size={15.5} $ls={-0.35} $weight={600} $color="#0b4fa5">Погода</Txt>
                      <Txt $w={87} $ml={13} $size={13} $ls={-0.35} $down={2} $color="#0b4fa5">Карта осадков</Txt>
                      <Txt $w={58} $ml={106} $size={15.5} $ls={-0.35} $weight={600} $color="#0b4fa5">Пробки</Txt>
                      <Txt $w={46} $ml={202} $size={15.5} $ls={-0.35} $weight={600} $color="#0b4fa5">Карта</Txt>
                    </Row>
                  </Page>
                  <VScroll>
                    <Icon width="8" height="5" viewBox="0 0 8 5"><path d="M.5 4.500L4 .5l3.500 4z" fill="#555" /></Icon>
                    <Thumb $w={13} $h={19} $m="23px 0 160px" />
                    <Icon width="8" height="5" viewBox="0 0 8 5"><path d="M.5.5h7L4 4.500z" fill="#555" /></Icon>
                  </VScroll>
                  <Messenger>
                    <Icon width="28" height="28" viewBox="0 0 28 28">
                      <defs><Grad id="ms" a="#5fdcd2" b="#2bc4bd" /></defs>
                      <rect width="28" height="28" rx="7" fill="url(#ms)" />
                      <path d="M7 4.500l19 9.500L5 24l3.500-10z" fill="#fff" />
                      <path d="M8.500 14L26 14 5 24z" fill="#d6f5f2" />
                      <path d="M4.500 10l4 4-4 4z" fill="#bdeeea" />
                    </Icon>
                    <Txt $w={85} $ml={9} $size={14} $lh={22}>Мессенджер</Txt>
                  </Messenger>
                </View>
                <HScroll>
                  <Icon $ml={6} width="5" height="8" viewBox="0 0 5 8"><path d="M4.500.5v7L.5 4z" fill="#999" /></Icon>
                  <Thumb $w={349} $h={13} $m="0 231px 0 6px" />
                  <Icon width="5" height="8" viewBox="0 0 5 8"><path d="M.5.5v7l4-3.500z" fill="#444" /></Icon>
                </HScroll>
              </Browser>
              <Taskbar>
                <TaskButton $w={48}>
                  <Icon width="16" height="16" viewBox="0 0 16 16">
                    <path d="M0 2.200L6.600 1.300v6.300H0zM7.500 1.200L16 0v7.600H7.500zM0 8.500h6.600v6.300L0 13.900zM7.500 8.500H16V16l-8.500-1.200z" fill="#fff" />
                  </Icon>
                </TaskButton>
                <TaskButton $w={48}>
                  <Icon width="16" height="16" viewBox="0 0 16 16">
                    <circle cx="10.500" cy="5.500" r="4.800" fill="none" stroke="#fff" strokeWidth="1.300" />
                    <path d="M7 9L.5 15.500" stroke="#fff" strokeWidth="1.300" />
                  </Icon>
                </TaskButton>
                <TaskButton $w={48}>
                  <Icon width="16" height="16" viewBox="0 0 16 16">
                    <circle cx="8" cy="8" r="6.600" fill="none" stroke="#fff" strokeWidth="2" />
                  </Icon>
                </TaskButton>
                <TaskButton $w={47}>
                  <Icon width="16" height="16" viewBox="0 0 16 16">
                    <path d="M.6 0v2.500h10V0M.6 16v-2.500h10V16M.6 4.500h10v7H.6zM14 0v16" fill="none" stroke="#fff" strokeWidth="1.200" />
                    <path d="M12.500 5h3v3h-3z" fill="#fff" />
                  </Icon>
                </TaskButton>
                <TaskButton $w={30} $ml={8} $open><EdgeLogo s={24} id="e2" /></TaskButton>
                <TaskButton $w={30} $ml={8}>
                  <Icon width="22" height="20" viewBox="0 0 22 20">
                    <path d="M0 1.500Q0 0 1.500 0H8l2 2.500h12V18H0z" fill="#f7c64f" />
                    <path d="M0 5h22v13H0z" fill="#ffdc75" />
                    <path d="M4 19v-6q0-2 2-2h10q2 0 2 2v6h-4v-4H8v4z" fill="#3d93dd" />
                  </Icon>
                </TaskButton>
                <TaskButton $w={30} $ml={9}>
                  <Icon width="24" height="24" viewBox="0 0 24 24">
                    <path d="M8 7V4.500a4 4 0 0 1 8 0V7M11 7V4a3 3 0 0 1 6 0" fill="none" stroke="#eee" strokeWidth="1.200" />
                    <path d="M1 7h23v15a1.500 1.500 0 0 1-1.500 1.500h-20A1.500 1.500 0 0 1 1 22z" fill="#fff" />
                    <path d="M7 10h5v5H7z" fill="#f25022" /><path d="M13.200 10h5v5h-5z" fill="#7fba00" />
                    <path d="M7 16.200h5v5H7z" fill="#00a4ef" /><path d="M13.200 16.200h5v5h-5z" fill="#ffb900" />
                  </Icon>
                </TaskButton>
                <TaskButton $w={30} $ml={10}>
                  <Icon width="24" height="20" viewBox="0 0 24 20">
                    <path d="M.5 6.500L12 .3l11.500 6.200V19.500H.5z" fill="#fff" />
                    <path d="M1.500 7L15 9.500 23 7.500 12.500 13l4.500 3-6-1.500z" fill="#1c1c1c" />
                  </Icon>
                </TaskButton>
                <TaskButton $w={30} $ml={8} $open>
                  <Icon width="22" height="18" viewBox="0 0 22 18">
                    <rect x=".5" y=".5" width="21" height="17" fill="#060606" stroke="#a5a5a5" />
                    <path d="M0 0h22v2.500H0z" fill="#c4c4c4" />
                    <path d="M3 6h2M6.500 5.500v1M6.500 8v.5M8 5l2 3.500M11 8.500h8" stroke="#eee" />
                  </Icon>
                </TaskButton>
                <Icon $ml={13} width="86" height="20" viewBox="1037 0 86 20">
                  <path d="M1037.500 13l5.500-5.500 5.500 5.500" fill="none" stroke="#fff" strokeWidth="1.300" />
                  <path d="M1060.500 6.500h13v8h-13zM1074 9h1.200v3h-1.200" fill="none" stroke="#fff" />
                  <path d="M1062 8h8v5h-8z" fill="#fff" />
                  <path d="M1086.500 16.500a11 11 0 0 1 11-11M1089.500 16.500a8 8 0 0 1 8-8M1092.500 16.500a5 5 0 0 1 5-5" fill="none" stroke="#ddd" strokeWidth="1.200" />
                  <circle cx="1096.500" cy="15.500" r="1.400" fill="#fff" />
                  <path d="M1107.500 8h2.500l3.500-3.500v11L1110 12h-2.500zM1116 7.500c1.200 1.500 1.200 3.500 0 5M1118.500 5.500c2 2.500 2 6.500 0 9M1121 4c2.700 3.500 2.700 8.500 0 12" fill="none" stroke="#fff" strokeWidth="1.100" />
                </Icon>
                <Txt $w={23} $ml={11} $size={12} $ls={-0.5}>РУС</Txt>
                <Clock>
                  <Txt $w={22} $size={11.5} $ls={-0.45}>2:33</Txt>
                  <Txt $w={54} $size={11.5} $ls={-0.45}>08.11.2020</Txt>
                </Clock>
                <Icon $ml={16} width="26" height="28" viewBox="0 0 26 28">
                  <path d="M1 4h16v12H9l-4 4v-4H1z" fill="#fff" />
                  <path d="M4 7.500h10M4 10h10M4 12.500h6" stroke="#1c1c1c" />
                  <circle cx="17" cy="19.500" r="7.500" fill="#333" stroke="#aaa" />
                  <text x="14" y="24" fontSize="12" fill="#fff">1</text>
                </Icon>
                <Icon $ml={10} width="1" height="40" viewBox="0 0 1 40"><path d="M.5 0v40" stroke="#777" /></Icon>
              </Taskbar>
            </Stage>
          </Main>
        </ClientBody>
        <StatusBar>
          <StatusIcons />
          <Txt $w={46} $ml={3} $size={11} $ls={-0.3}>Right Ctrl</Txt>
          <Icon $ml={9} $mt={7} width="9" height="9" viewBox="0 0 9 9">
            <path d="M6 0h2v2H6zM3 3h2v2H3zM6 3h2v2H6zM0 6h2v2H0zM3 6h2v2H3zM6 6h2v2H6z" fill="#bcbcbc" />
          </Icon>
          <Txt $w={3} />
        </StatusBar>
      </VmWindow>
      <Tooltip><Txt $w={200} $size={14} $lh={20} $ls={0.15}>Отключиться (Control_R + F4)</Txt></Tooltip>
    </Desktop>
  );
}
